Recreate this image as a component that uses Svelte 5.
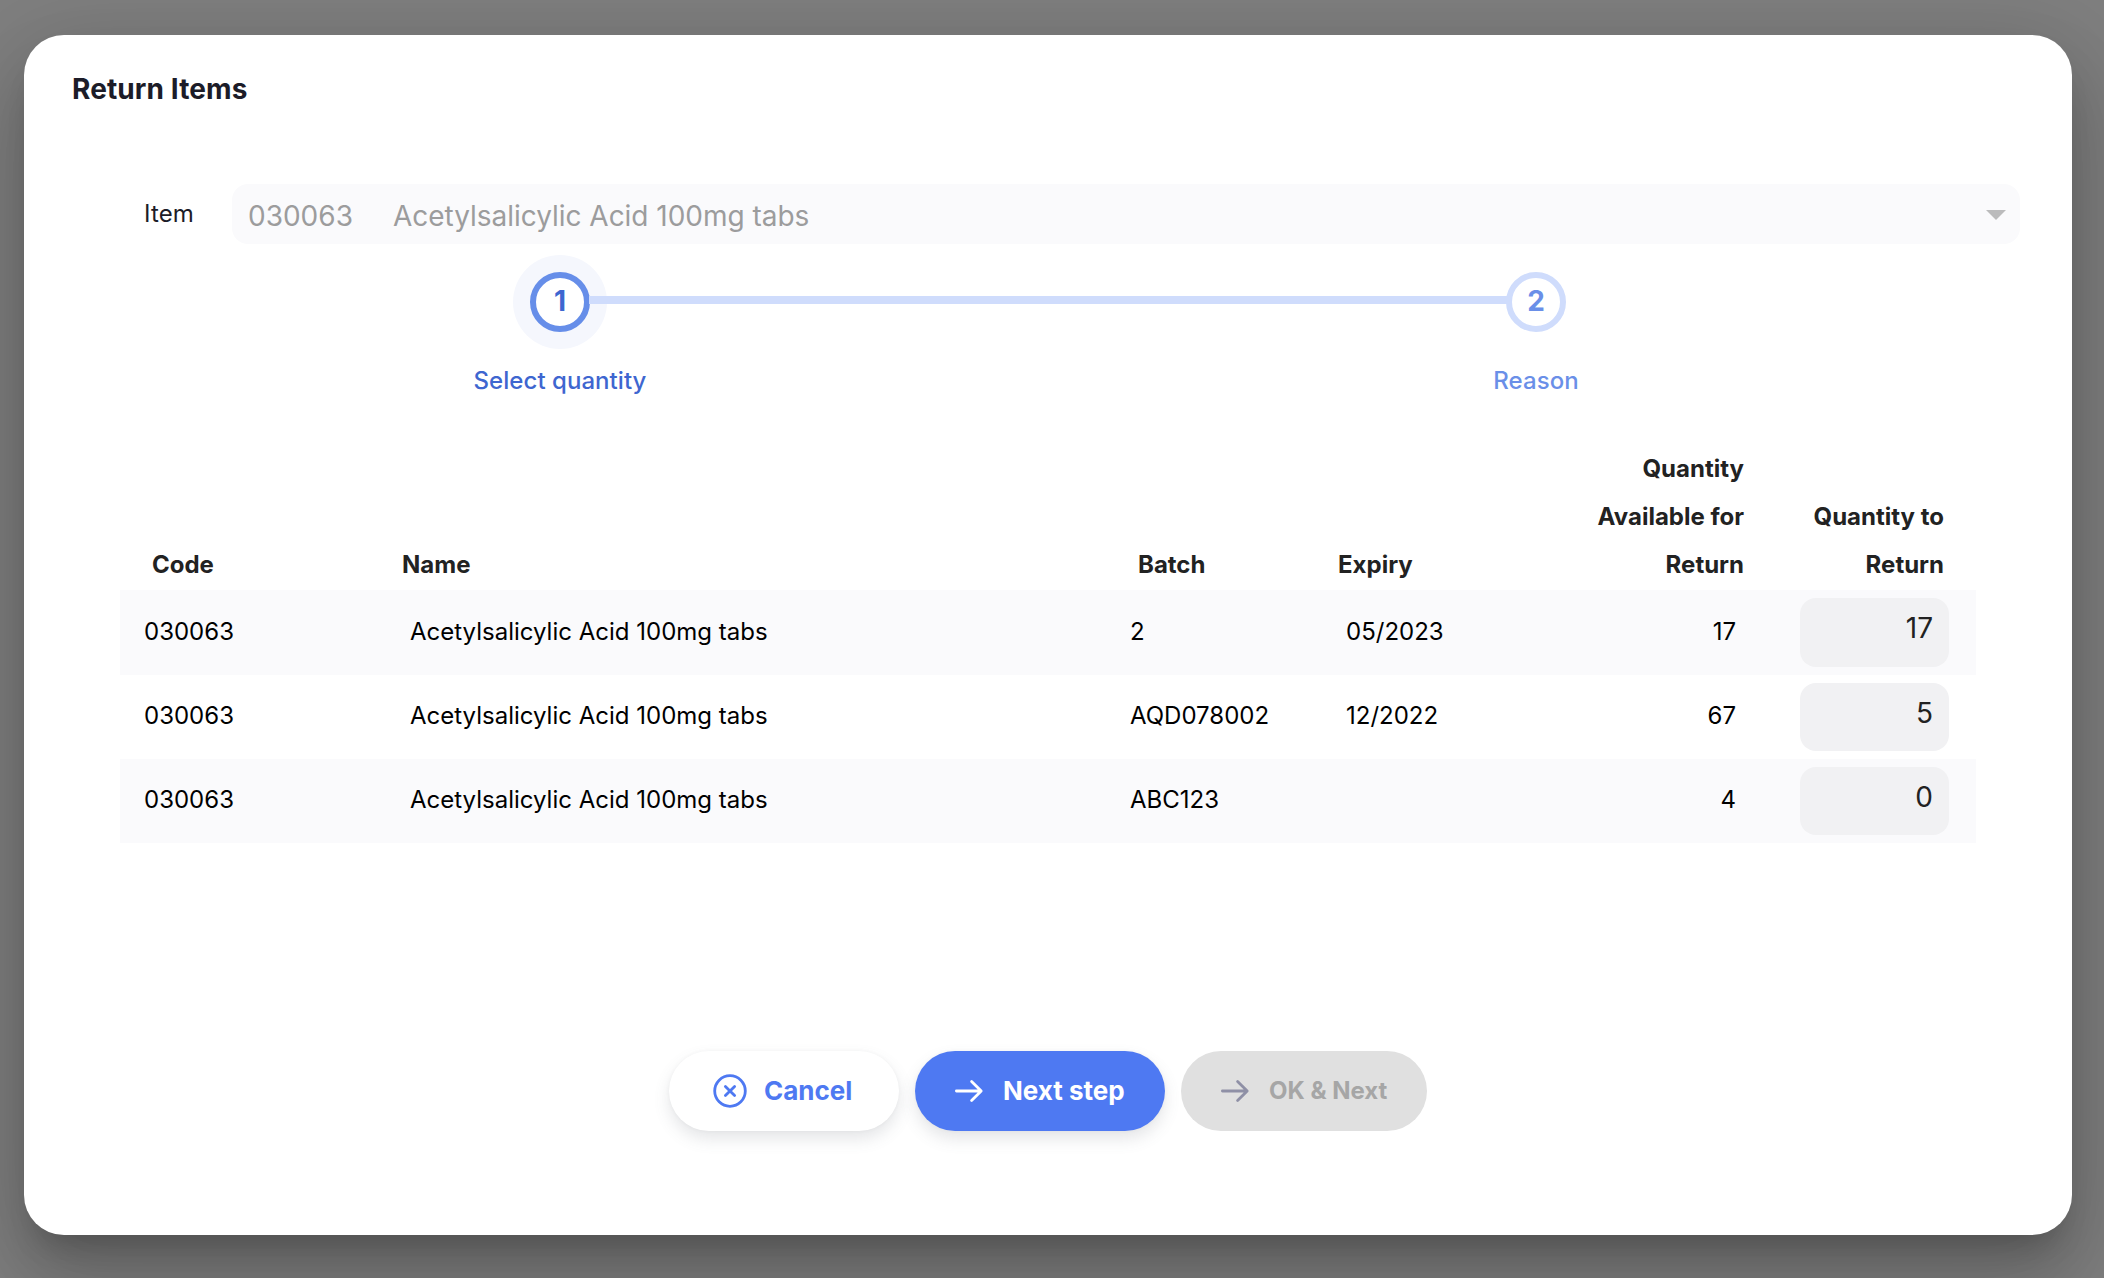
<script>
  const steps = [
    { number: 1, label: 'Select quantity', active: true },
    { number: 2, label: 'Reason', active: false },
  ];

  const name = 'Acetylsalicylic Acid 100mg tabs';
  let rows = $state([
    { code: '030063', name, batch: '2', expiry: '05/2023', available: 17, quantity: 17 },
    { code: '030063', name, batch: 'AQD078002', expiry: '12/2022', available: 67, quantity: 5 },
    { code: '030063', name, batch: 'ABC123', expiry: '', available: 4, quantity: 0 },
  ]);
</script>

{#snippet arrow()}
  <svg class="icon" viewBox="0 0 40 40" fill="none" stroke="currentColor" stroke-width="2.8" stroke-linecap="round" stroke-linejoin="round">
    <path d="M7.4 20H32M22.6 10.4L32.2 20L22.6 29.6" />
  </svg>
{/snippet}

<div class="backdrop">
  <div class="dialog" role="dialog" aria-label="Return Items">
    <h1>Return Items</h1>

    <div class="item">
      <span class="item-label">Item</span>
      <div class="select">
        <span class="select-code">030063</span>
        <span class="select-name">{name}</span>
        <svg class="caret" viewBox="0 0 20 10"><path d="M0 0h20L10 10z" fill="currentColor" /></svg>
      </div>
    </div>

    <div class="stepper">
      {#each steps as step, i}
        {#if i > 0}<div class="connector"></div>{/if}
        <div class="step" class:active={step.active}>
          <div class="circle">{step.number}</div>
          <div class="step-label">{step.label}</div>
        </div>
      {/each}
    </div>

    <div class="table">
      <div class="row head">
        <div class="code">Code</div>
        <div class="name">Name</div>
        <div class="batch">Batch</div>
        <div class="expiry">Expiry</div>
        <div class="available">Quantity<br />Available for<br />Return</div>
        <div class="quantity">Quantity to<br />Return</div>
      </div>
      {#each rows as row}
        <div class="row body">
          <div class="code">{row.code}</div>
          <div class="name">{row.name}</div>
          <div class="batch">{row.batch}</div>
          <div class="expiry">{row.expiry}</div>
          <div class="available">{row.available}</div>
          <div class="quantity"><div class="field">{row.quantity}</div></div>
        </div>
      {/each}
    </div>

    <div class="actions">
      <button class="cancel">
        <svg class="icon" viewBox="0 0 40 40" fill="none" stroke="currentColor" stroke-width="2.8" stroke-linecap="round">
          <circle cx="20" cy="20" r="15.3" />
          <path d="M15.4 15.4l9.2 9.2M24.6 15.4l-9.2 9.2" />
        </svg>
        <span>Cancel</span>
      </button>
      <button class="next">{@render arrow()}<span>Next step</span></button>
      <button class="ok" disabled>{@render arrow()}<span>OK &amp; Next</span></button>
    </div>
  </div>
</div>

<style>
  :global(body) {
    margin: 0;
    overflow: hidden;
  }

  .backdrop {
    box-sizing: border-box;
    width: 2104px;
    height: 1278px;
    padding: 35px 32px 43px 24px;
    overflow: hidden;
    background: #7f7f7f;
    font-family: Inter, 'Liberation Sans', sans-serif;
    color: #1c1c28;
  }

  .dialog {
    display: flex;
    flex-direction: column;
    height: 1200px;
    background: #fff;
    border-radius: 40px;
    box-shadow:
      0 22px 30px -14px rgba(0, 0, 0, 0.2),
      0 48px 76px 6px rgba(0, 0, 0, 0.14),
      0 18px 92px 16px rgba(0, 0, 0, 0.12);
  }

  h1 {
    height: 48px;
    margin: 30px 0 71px 48px;
    font-size: 28px;
    font-weight: 700;
    line-height: 48px;
    letter-spacing: 0.1px;
  }

  .item {
    display: flex;
    align-items: center;
    height: 60px;
    padding: 0 52px 0 120px;
  }

  .item-label {
    width: 88px;
    padding-bottom: 2px;
    font-size: 24px;
    letter-spacing: 0.15px;
  }

  .select {
    display: flex;
    flex: 1;
    align-items: center;
    box-sizing: border-box;
    height: 60px;
    padding: 4px 14px 0 16px;
    border-radius: 16px;
    background: #fafafc;
    color: #9c9c9d;
    font-size: 28px;
  }

  .select-code {
    width: 145px;
  }

  .select-name {
    flex: 1;
    letter-spacing: -0.03px;
  }

  .caret {
    width: 20px;
    height: 10px;
    margin-top: -2px;
    color: #bbbbbc;
  }

  .stepper {
    display: flex;
    justify-content: center;
    box-sizing: border-box;
    height: 158px;
    padding-top: 28px;
  }

  .step {
    display: flex;
    flex-direction: column;
    align-items: center;
    width: 60px;
    color: #6a8fe8;
  }

  .step.active {
    color: #3e66d0;
  }

  .circle {
    display: flex;
    align-items: center;
    justify-content: center;
    box-sizing: border-box;
    width: 60px;
    height: 60px;
    padding-bottom: 2px;
    border: 6px solid #cfdcfc;
    border-radius: 50%;
    background: #fff;
    font-size: 28px;
    font-weight: 700;
  }

  .active .circle {
    border-color: #668ee9;
    box-shadow: 0 0 0 17px #f5f7fd;
  }

  .step-label {
    margin-top: 32px;
    font-size: 24px;
    font-weight: 500;
    line-height: 34px;
    letter-spacing: 0.05px;
    white-space: nowrap;
  }

  .connector {
    z-index: 1;
    width: 918px;
    height: 8px;
    margin: 24px -1px 0;
    background: #cfdcfc;
  }

  .table {
    margin: 32px 96px 0;
  }

  .row {
    display: grid;
    grid-template-columns: 266px 728px 208px 206px 232px 216px;
    font-size: 24px;
  }

  .head {
    box-sizing: border-box;
    height: 156px;
    padding-bottom: 1px;
    align-items: end;
    line-height: 48px;
    font-weight: 700;
    color: #222;
  }

  .body {
    height: 84px;
    align-items: center;
    color: #000;
  }

  .body:nth-child(2) {
    height: 85px;
  }

  .body:nth-child(even) {
    background: #fafafc;
  }

  .body > div {
    padding-bottom: 3px;
  }

  .available,
  .quantity {
    text-align: right;
  }

  .head .code { padding-left: 32px; }
  .head .name { padding-left: 16px; }
  .head .batch { padding-left: 24px; }
  .head .expiry { padding-left: 16px; }
  .head .available { padding-right: 16px; }
  .head .quantity { padding-right: 32px; }

  .body .code { padding-left: 24px; }
  .body .name { padding-left: 24px; }
  .body .batch { padding-left: 16px; }
  .body .expiry { padding-left: 24px; }
  .body .available { padding-right: 24px; }

  .body .quantity {
    box-sizing: border-box;
    height: 100%;
    padding: 8px 27px 8px 40px;
  }

  .field {
    box-sizing: border-box;
    height: 100%;
    padding: 7px 16px 0 0;
    border-radius: 16px;
    background: #f1f1f3;
    color: #222;
    font-size: 28px;
    line-height: 46px;
  }

  .actions {
    display: flex;
    justify-content: center;
    gap: 16px;
    margin-top: 208px;
  }

  button {
    display: flex;
    align-items: center;
    box-sizing: border-box;
    height: 80px;
    padding: 0 0 0 34px;
    border: 0;
    border-radius: 40px;
    font-family: inherit;
    font-size: 26px;
    font-weight: 700;
    white-space: nowrap;
    box-shadow: 0 8px 16px rgba(96, 97, 112, 0.16), 0 0 4px rgba(40, 41, 61, 0.04);
  }

  button span {
    padding-bottom: 2px;
  }

  .icon {
    flex: none;
    width: 40px;
    height: 40px;
    margin-right: 14px;
  }

  .cancel {
    width: 230px;
    padding-left: 41px;
    background: #fff;
    color: #4e79f2;
  }

  .next {
    width: 250px;
    background: #4e79f2;
    color: #fff;
  }

  .ok {
    width: 246px;
    background: #e0e0e0;
    color: #a6a6a6;
    font-size: 24px;
    box-shadow: none;
  }

  .ok .icon {
    color: #8f90a6;
  }
</style>
